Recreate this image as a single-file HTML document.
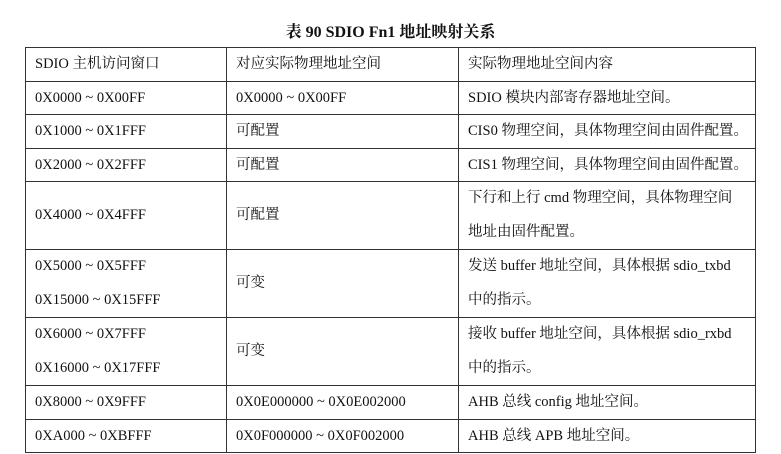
<!DOCTYPE html><html><head><meta charset="utf-8"><style>
body{margin:0;width:781px;height:454px;background:#fff;font-family:"Liberation Serif","Noto Serif CJK SC",serif;color:#111;position:relative;overflow:hidden}
.t{position:absolute;top:19px;left:0;width:781px;text-align:center;font-size:16px;font-weight:bold}
table{position:absolute;left:25px;top:47px;border-collapse:collapse;font-size:14.5px}
td{border:1px solid #333;padding:0 0 0 9px;vertical-align:middle;line-height:32.5px;white-space:nowrap}
tr.m td{line-height:33.5px}
</style></head><body>
<div class="t">表 90 SDIO Fn1 地址映射关系</div>
<table>
<colgroup><col style="width:201px"><col style="width:232px"><col style="width:297px"></colgroup>
<tr><td>SDIO 主机访问窗口</td><td>对应实际物理地址空间</td><td>实际物理地址空间内容</td></tr>
<tr><td>0X0000 ~ 0X00FF</td><td>0X0000 ~ 0X00FF</td><td>SDIO 模块内部寄存器地址空间。</td></tr>
<tr><td>0X1000 ~ 0X1FFF</td><td>可配置</td><td>CIS0 物理空间，具体物理空间由固件配置。</td></tr>
<tr><td>0X2000 ~ 0X2FFF</td><td>可配置</td><td>CIS1 物理空间，具体物理空间由固件配置。</td></tr>
<tr class="m"><td>0X4000 ~ 0X4FFF</td><td>可配置</td><td>下行和上行 cmd 物理空间，具体物理空间<br>地址由固件配置。</td></tr>
<tr class="m"><td>0X5000 ~ 0X5FFF<br>0X15000 ~ 0X15FFF</td><td>可变</td><td>发送 buffer 地址空间，具体根据 sdio_txbd<br>中的指示。</td></tr>
<tr class="m"><td>0X6000 ~ 0X7FFF<br>0X16000 ~ 0X17FFF</td><td>可变</td><td>接收 buffer 地址空间，具体根据 sdio_rxbd<br>中的指示。</td></tr>
<tr><td>0X8000 ~ 0X9FFF</td><td>0X0E000000 ~ 0X0E002000</td><td>AHB 总线 config 地址空间。</td></tr>
<tr><td>0XA000 ~ 0XBFFF</td><td>0X0F000000 ~ 0X0F002000</td><td>AHB 总线 APB 地址空间。</td></tr>
</table>
</body></html>
